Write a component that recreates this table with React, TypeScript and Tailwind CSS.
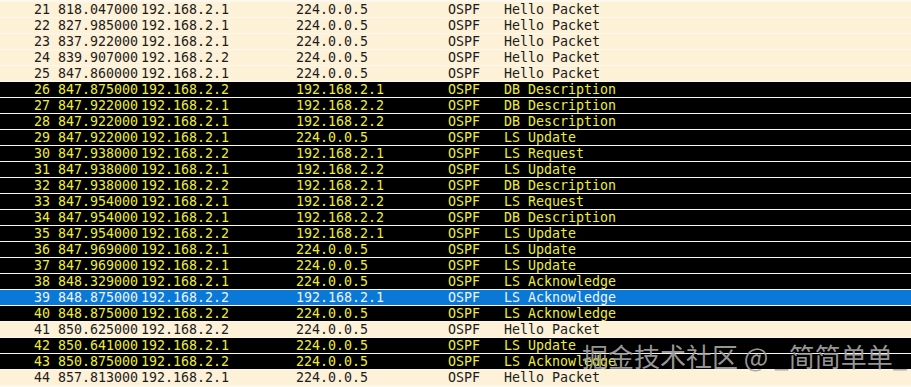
import React from "react"

type Kind = "hello" | "dark" | "sel"

const packets: [number, string, string, string, string, Kind][] = [
  [21, "818.047000", "192.168.2.1", "224.0.0.5", "Hello Packet", "hello"],
  [22, "827.985000", "192.168.2.1", "224.0.0.5", "Hello Packet", "hello"],
  [23, "837.922000", "192.168.2.1", "224.0.0.5", "Hello Packet", "hello"],
  [24, "839.907000", "192.168.2.2", "224.0.0.5", "Hello Packet", "hello"],
  [25, "847.860000", "192.168.2.1", "224.0.0.5", "Hello Packet", "hello"],
  [26, "847.875000", "192.168.2.2", "192.168.2.1", "DB Description", "dark"],
  [27, "847.922000", "192.168.2.1", "192.168.2.2", "DB Description", "dark"],
  [28, "847.922000", "192.168.2.1", "192.168.2.2", "DB Description", "dark"],
  [29, "847.922000", "192.168.2.1", "224.0.0.5", "LS Update", "dark"],
  [30, "847.938000", "192.168.2.2", "192.168.2.1", "LS Request", "dark"],
  [31, "847.938000", "192.168.2.1", "192.168.2.2", "LS Update", "dark"],
  [32, "847.938000", "192.168.2.2", "192.168.2.1", "DB Description", "dark"],
  [33, "847.954000", "192.168.2.1", "192.168.2.2", "LS Request", "dark"],
  [34, "847.954000", "192.168.2.1", "192.168.2.2", "DB Description", "dark"],
  [35, "847.954000", "192.168.2.2", "192.168.2.1", "LS Update", "dark"],
  [36, "847.969000", "192.168.2.1", "224.0.0.5", "LS Update", "dark"],
  [37, "847.969000", "192.168.2.1", "224.0.0.5", "LS Update", "dark"],
  [38, "848.329000", "192.168.2.1", "224.0.0.5", "LS Acknowledge", "dark"],
  [39, "848.875000", "192.168.2.2", "192.168.2.1", "LS Acknowledge", "sel"],
  [40, "848.875000", "192.168.2.2", "224.0.0.5", "LS Acknowledge", "dark"],
  [41, "850.625000", "192.168.2.2", "224.0.0.5", "Hello Packet", "hello"],
  [42, "850.641000", "192.168.2.1", "224.0.0.5", "LS Update", "dark"],
  [43, "850.875000", "192.168.2.2", "224.0.0.5", "LS Acknowledge", "dark"],
  [44, "857.813000", "192.168.2.1", "224.0.0.5", "Hello Packet", "hello"],
]

const rowStyle: Record<Kind, string> = {
  hello: "bg-[#fdf1d7] text-[#1c1c1c]",
  dark: "bg-black text-[#ecec3e]",
  sel: "bg-[#0a78d7] text-[#eef4fb]",
}

export default function App() {
  return (
    <div className="relative w-[911px] h-[387px] overflow-hidden bg-[#fdf8ee] pt-[2px] font-['DejaVu_Sans_Mono',monospace] text-[13.3px] leading-[15px]">
      {/* Packet list */}
      <div className="flex flex-col gap-px">
        {packets.map(([no, time, src, dst, info, kind]) => (
          <div
            key={no}
            className={`grid grid-cols-[58px_83px_154px_153px_56px_1fr] h-[15px] whitespace-nowrap ${rowStyle[kind]}`}
          >
            <span className="text-right pr-[8px]">{no}</span>
            <span>{time}</span>
            <span>{src}</span>
            <span className="pl-px">{dst}</span>
            <span>OSPF</span>
            <span>{info}</span>
          </div>
        ))}
      </div>

      {/* Watermark */}
      <div className="absolute left-[582px] top-[340px] whitespace-nowrap font-['Noto_Sans_CJK_SC',sans-serif] text-[26px] leading-[32px] text-[rgba(165,165,165,0.92)]">
        掘金技术社区 @ _简简单单_
      </div>
    </div>
  )
}
